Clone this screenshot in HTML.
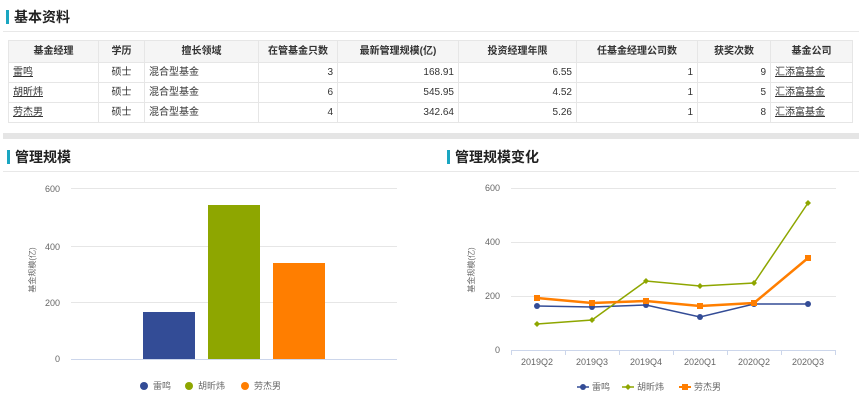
<!DOCTYPE html>
<html><head><meta charset="utf-8"><style>
body{margin:0;width:859px;height:404px;background:#fff;font-family:"Liberation Sans","Noto Sans CJK SC",sans-serif;position:relative;overflow:hidden;color:#333}
.t{position:absolute;font-size:14px;font-weight:bold;color:#222;line-height:16px}
.t:before{content:"";position:absolute;left:-8px;top:1px;width:3px;height:14px;background:#1aa6c1}
.hl{position:absolute;height:1px;background:#e8e8e8}
table{position:absolute;left:8px;top:40px;border-collapse:collapse;font-size:10px;width:845px}
td,th{border:1px solid #e6e6e6;height:19px;padding:0 4px;white-space:nowrap;line-height:12px}
th{background:#f5f5f5;font-weight:bold;height:21px;color:#333}
td.r{text-align:right}td.c{text-align:center}
a{color:#333;text-decoration:underline}
</style></head><body>
<div class="t" style="left:14px;top:9px">基本资料</div>
<div class="hl" style="left:3px;top:31px;width:856px"></div>
<table>
<tr><th style="width:81px">基金经理</th><th style="width:37px">学历</th><th style="width:105px">擅长领域</th><th style="width:70px">在管基金只数</th><th style="width:112px">最新管理规模(亿)</th><th style="width:109px">投资经理年限</th><th style="width:112px">任基金经理公司数</th><th style="width:64px">获奖次数</th><th>基金公司</th></tr>
<tr><td><a>雷鸣</a></td><td class="c">硕士</td><td>混合型基金</td><td class="r">3</td><td class="r">168.91</td><td class="r">6.55</td><td class="r">1</td><td class="r">9</td><td><a>汇添富基金</a></td></tr>
<tr><td><a>胡昕炜</a></td><td class="c">硕士</td><td>混合型基金</td><td class="r">6</td><td class="r">545.95</td><td class="r">4.52</td><td class="r">1</td><td class="r">5</td><td><a>汇添富基金</a></td></tr>
<tr><td><a>劳杰男</a></td><td class="c">硕士</td><td>混合型基金</td><td class="r">4</td><td class="r">342.64</td><td class="r">5.26</td><td class="r">1</td><td class="r">8</td><td><a>汇添富基金</a></td></tr>
</table>
<div style="position:absolute;left:3px;top:133px;width:856px;height:6px;background:#e5e5e5"></div>
<div class="t" style="left:15px;top:149px">管理规模</div>
<div class="t" style="left:455px;top:149px">管理规模变化</div>
<div class="hl" style="left:3px;top:171px;width:856px"></div>
<svg style="position:absolute;left:0;top:0" width="859" height="404" font-family="Liberation Sans,Noto Sans CJK SC,sans-serif" font-size="9" fill="#666">
<g stroke="#e6e6e6" stroke-width="1">
<line x1="71" y1="188.5" x2="397" y2="188.5"/><line x1="71" y1="246.5" x2="397" y2="246.5"/><line x1="71" y1="302.5" x2="397" y2="302.5"/>
<line x1="511" y1="188.5" x2="836" y2="188.5"/><line x1="511" y1="242.5" x2="836" y2="242.5"/><line x1="511" y1="296.5" x2="836" y2="296.5"/>
</g>
<g stroke="#ccd6eb"><line x1="71" y1="359.5" x2="397" y2="359.5"/><line x1="511" y1="350.5" x2="836" y2="350.5"/>
<line x1="511.5" y1="350" x2="511.5" y2="355"/><line x1="565.5" y1="350" x2="565.5" y2="355"/><line x1="619.5" y1="350" x2="619.5" y2="355"/><line x1="673.5" y1="350" x2="673.5" y2="355"/><line x1="727.5" y1="350" x2="727.5" y2="355"/><line x1="781.5" y1="350" x2="781.5" y2="355"/><line x1="835.5" y1="350" x2="835.5" y2="355"/></g>
<g text-anchor="end"><text x="60" y="192">600</text><text x="60" y="250">400</text><text x="60" y="306">200</text><text x="60" y="362">0</text>
<text x="500" y="191">600</text><text x="500" y="245">400</text><text x="500" y="299">200</text><text x="500" y="353">0</text></g>
<text transform="translate(35,270) rotate(-90)" text-anchor="middle" font-size="8">基金规模(亿)</text>
<text transform="translate(474,270) rotate(-90)" text-anchor="middle" font-size="8">基金规模(亿)</text>
<rect x="143" y="312" width="52" height="47" fill="#334c96"/>
<rect x="208" y="205" width="52" height="154" fill="#8ea600"/>
<rect x="273" y="263" width="52" height="96" fill="#ff7e00"/>
<circle cx="144" cy="386" r="4" fill="#334c96"/><text x="153" y="389">雷鸣</text>
<circle cx="189" cy="386" r="4" fill="#8ea600"/><text x="198" y="389">胡昕炜</text>
<circle cx="245" cy="386" r="4" fill="#ff7e00"/><text x="254" y="389">劳杰男</text>
<g text-anchor="middle"><text x="537" y="365">2019Q2</text><text x="592" y="365">2019Q3</text><text x="646" y="365">2019Q4</text><text x="700" y="365">2020Q1</text><text x="754" y="365">2020Q2</text><text x="808" y="365">2020Q3</text></g>
<polyline fill="none" stroke="#334c96" stroke-width="1.5" points="537,306 592,307 646,305 700,317 754,304 808,304"/>
<g fill="#334c96"><circle cx="537" cy="306" r="3"/><circle cx="592" cy="307" r="3"/><circle cx="646" cy="305" r="3"/><circle cx="700" cy="317" r="3"/><circle cx="754" cy="304" r="3"/><circle cx="808" cy="304" r="3"/></g>
<polyline fill="none" stroke="#8ea600" stroke-width="1.5" points="537,324 592,320 646,281 700,286 754,283 808,203"/>
<g fill="#8ea600"><path d="M537 321l3 3-3 3-3-3z"/><path d="M592 317l3 3-3 3-3-3z"/><path d="M646 278l3 3-3 3-3-3z"/><path d="M700 283l3 3-3 3-3-3z"/><path d="M754 280l3 3-3 3-3-3z"/><path d="M808 200l3 3-3 3-3-3z"/></g>
<polyline fill="none" stroke="#ff7e00" stroke-width="2.5" points="537,298 592,303 646,301 700,306 754,303 808,258"/>
<g fill="#ff7e00"><rect x="534" y="295" width="6" height="6"/><rect x="589" y="300" width="6" height="6"/><rect x="643" y="298" width="6" height="6"/><rect x="697" y="303" width="6" height="6"/><rect x="751" y="300" width="6" height="6"/><rect x="805" y="255" width="6" height="6"/></g>
<line x1="577" y1="387" x2="589" y2="387" stroke="#334c96" stroke-width="1.5"/><circle cx="583" cy="387" r="3" fill="#334c96"/><text x="592" y="390">雷鸣</text>
<line x1="622" y1="387" x2="634" y2="387" stroke="#8ea600" stroke-width="1.5"/><path d="M628 384l3 3-3 3-3-3z" fill="#8ea600"/><text x="637" y="390">胡昕炜</text>
<line x1="679" y1="387" x2="691" y2="387" stroke="#ff7e00" stroke-width="2"/><rect x="682" y="384" width="6" height="6" fill="#ff7e00"/><text x="694" y="390">劳杰男</text>
</svg>
</body></html>
